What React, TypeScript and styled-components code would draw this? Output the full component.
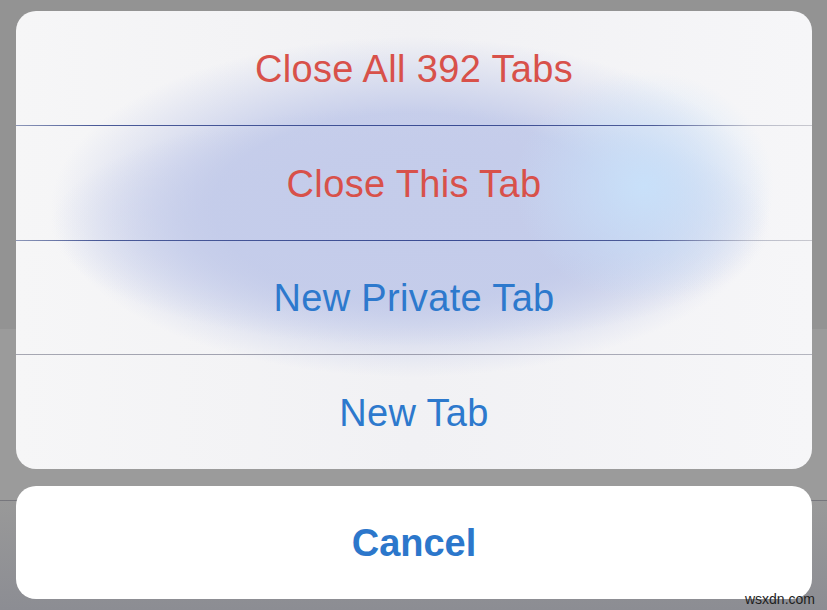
import React from 'react';
import styled, { createGlobalStyle } from 'styled-components';

const GlobalStyle = createGlobalStyle`
  html, body {
    margin: 0;
    padding: 0;
  }
  body {
    font-family: "Liberation Sans", Arial, sans-serif;
    background: #999999;
  }
`;

const Page = styled.div`
  position: relative;
  width: 827px;
  height: 610px;
  box-sizing: border-box;
  padding: 11px 15px 11px 16px;
  display: flex;
  flex-direction: column;
  gap: 17px;
  overflow: hidden;
  background:
    linear-gradient(to bottom,
      transparent 0 500px,
      rgba(90, 90, 100, 0.55) 500px 501px,
      transparent 501px),
    linear-gradient(to bottom,
      #939393 0 329px,
      #9b9b9b 329px 500px,
      #999999 501px,
      #8c8d93 610px);
`;

const Sheet = styled.div`
  height: 458px;
  border-radius: 20px;
  overflow: hidden;
  display: flex;
  flex-direction: column;
  background:
    radial-gradient(ellipse 130px 115px at 628px 175px, rgba(200, 225, 250, 0.95), rgba(200, 225, 250, 0) 100%),
    radial-gradient(ellipse 360px 120px at 395px 215px, rgba(196, 204, 234, 0.85) 0%, rgba(196, 204, 234, 0.7) 60%, rgba(196, 204, 234, 0) 100%),
    radial-gradient(ellipse 360px 170px at 395px 196px, rgba(196, 204, 234, 1) 0%, rgba(196, 204, 234, 0.95) 55%, rgba(196, 204, 234, 0) 100%),
    linear-gradient(to right, #f6f6f7 0%, #f1f1f4 50%, #f6f6f8 100%);
`;

const Option = styled.button<{ $tone: 'danger' | 'default' }>`
  flex: 1;
  border: none;
  background: transparent;
  padding: 3px 0 0;
  display: flex;
  align-items: center;
  justify-content: center;
  font-family: "Liberation Sans", Arial, sans-serif;
  font-size: 38px;
  letter-spacing: 0.35px;
  font-weight: 400;
  color: ${(p) => (p.$tone === 'danger' ? '#d8514a' : '#2d79cd')};
  cursor: pointer;
`;

const Divider = styled.div<{ $strong?: boolean }>`
  height: 1px;
  flex: none;
  background: ${(p) =>
    p.$strong
      ? 'linear-gradient(to right, #8d97b8 0%, #4a5a98 10%, #3a4c94 55%, #4d5c98 80%, #b9bcca 92%, #c8c8cf 100%)'
      : 'linear-gradient(to right, #a6a7b2 0%, #9d9eae 50%, #b4b5bf 100%)'};
`;

const CancelButton = styled.button`
  height: 113px;
  border: none;
  border-radius: 20px;
  background: #ffffff;
  padding: 2px 0 0;
  display: flex;
  align-items: center;
  justify-content: center;
  font-family: "Liberation Sans", Arial, sans-serif;
  font-size: 38px;
  font-weight: 700;
  color: #2c77cb;
  cursor: pointer;
`;

const Watermark = styled.span`
  position: absolute;
  right: 12px;
  bottom: 3px;
  font-family: "Liberation Sans", Arial, sans-serif;
  font-size: 14px;
  color: #1e1e1e;
`;

const options: { label: string; tone: 'danger' | 'default' }[] = [
  { label: 'Close All 392 Tabs', tone: 'danger' },
  { label: 'Close This Tab', tone: 'danger' },
  { label: 'New Private Tab', tone: 'default' },
  { label: 'New Tab', tone: 'default' },
];

export default function App() {
  return (
    <Page>
      <GlobalStyle />
      <Sheet>
        {options.map((o, i) => (
          <React.Fragment key={o.label}>
            {i > 0 && <Divider $strong={i < 3} />}
            <Option $tone={o.tone}>{o.label}</Option>
          </React.Fragment>
        ))}
      </Sheet>
      <CancelButton>Cancel</CancelButton>
      <Watermark>wsxdn.com</Watermark>
    </Page>
  );
}
